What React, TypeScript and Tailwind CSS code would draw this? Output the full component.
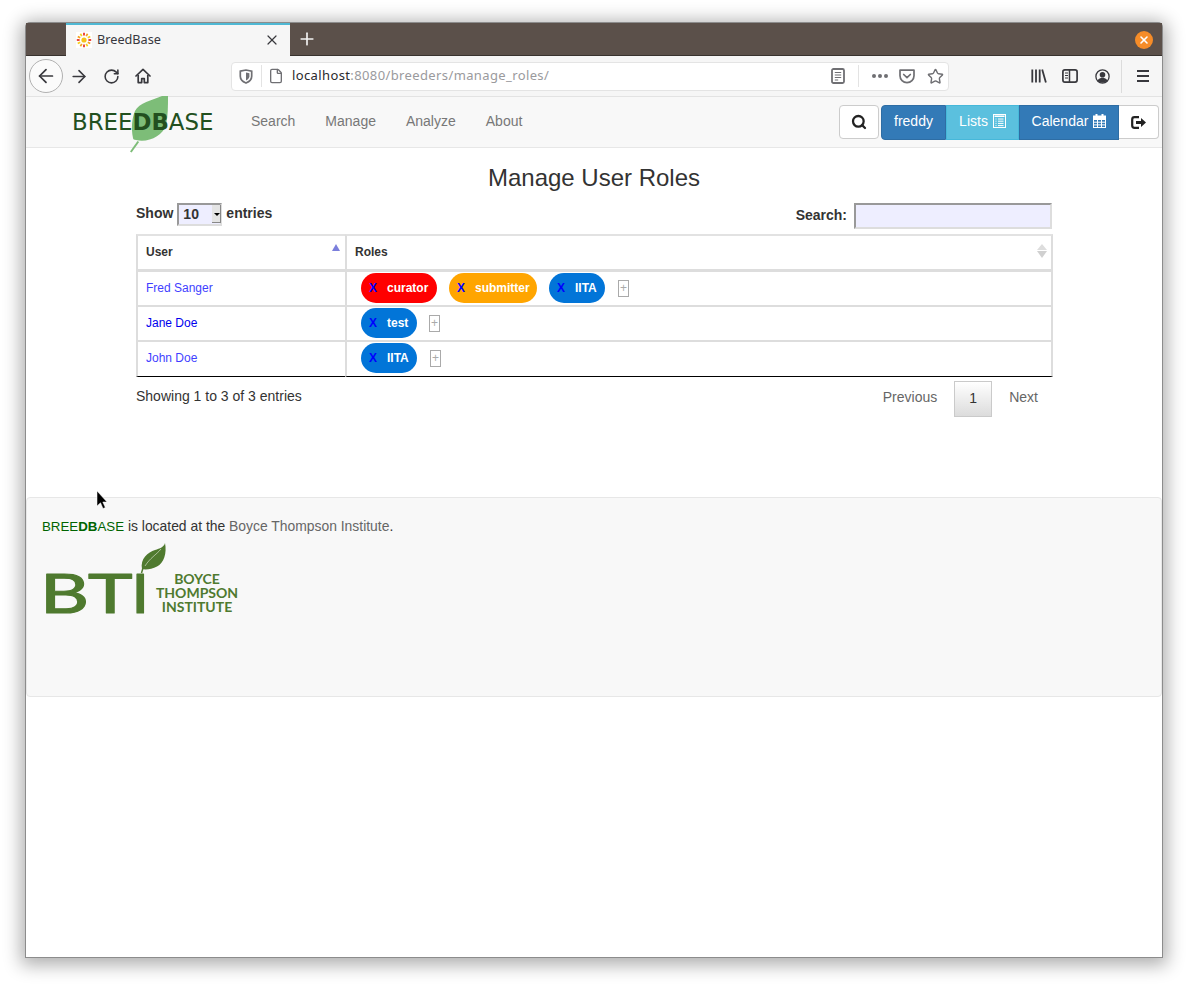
// Firefox window showing the BreedBase "Manage User Roles" page.

import { ArrowLeft, ArrowRight, File, Plus, RotateCw, Search, Star, X } from 'lucide-react';

const chromeFont = "font-['Noto_Sans','Open_Sans',sans-serif]";

type Role = { name: string; color: string; width: string };

const users: { name: string; link: string; roles: Role[]; plusGap: string }[] = [
  {
    name: 'Fred Sanger',
    link: 'text-[#3f3fff]',
    roles: [
      { name: 'curator', color: 'bg-[#ff0000]', width: 'w-[76px]' },
      { name: 'submitter', color: 'bg-[#ffa500]', width: 'w-[88px]' },
      { name: 'IITA', color: 'bg-[#0275d8]', width: 'w-[56px]' },
    ],
    plusGap: 'ml-[1px]',
  },
  {
    name: 'Jane Doe',
    link: 'text-[#0000ee]',
    roles: [{ name: 'test', color: 'bg-[#0275d8]', width: 'w-[56px]' }],
    plusGap: 'ml-0',
  },
  {
    name: 'John Doe',
    link: 'text-[#3f3fff]',
    roles: [{ name: 'IITA', color: 'bg-[#0275d8]', width: 'w-[56px]' }],
    plusGap: 'ml-[1px]',
  },
];

function Favicon() {
  return (
    <svg width="16" height="16" viewBox="0 0 16 16" className="bg-white">
      <circle cx="8" cy="8" r="2.6" fill="#f6c21c" />
      {Array.from({ length: 12 }).map((_, i) => (
        <line
          key={i}
          x1="8"
          y1="3.6"
          x2="8"
          y2="0.8"
          stroke={i % 3 === 0 ? '#e8261c' : i % 3 === 1 ? '#f4a11c' : '#f7d01e'}
          strokeWidth="1.7"
          transform={`rotate(${i * 30} 8 8)`}
        />
      ))}
    </svg>
  );
}

function HomeIcon() {
  return (
    <svg width="16" height="16" viewBox="0 0 16 16" fill="none" stroke="#38383d" strokeWidth="1.7">
      <path d="M1 8 8 1.4 15 8" strokeLinejoin="round" strokeLinecap="round" />
      <path d="M3.2 7v7.6h3.5v-4h2.6v4h3.5V7" strokeLinejoin="round" />
    </svg>
  );
}

function ShieldIcon() {
  return (
    <svg width="14" height="15" viewBox="0 0 14 15" fill="none">
      <path d="M1.3 2.2 7 1l5.7 1.2v5c0 3.2-2.6 5.5-5.7 6.8C3.9 12.7 1.3 10.4 1.3 7.2z" stroke="#6f6f73" strokeWidth="1.7" />
      <path d="M7 3.5 10.4 4.2v3c0 1.9-1.5 3.3-3.4 4.2z" fill="#6f6f73" />
    </svg>
  );
}

function ReaderIcon() {
  return (
    <svg width="14" height="16" viewBox="0 0 14 16" fill="none" stroke="#6f6f73">
      <rect x="1" y="1" width="12" height="14" rx="1.5" strokeWidth="1.8" />
      <path d="M3.8 4.5h6.4M3.8 7h6.4M3.8 9.5h6.4M3.8 12h3.4" strokeWidth="1.1" />
    </svg>
  );
}

function PocketIcon() {
  return (
    <svg width="16" height="15" viewBox="0 0 16 15" fill="none" stroke="#6f6f73" strokeWidth="1.7">
      <path d="M1 1.2h14v5.6c0 3.7-3.1 6.8-7 6.8s-7-3.1-7-6.800z" strokeLinejoin="round" />
      <path d="M4.700 5.500 8 8.700l3.300-3.200" strokeLinecap="round" strokeLinejoin="round" />
    </svg>
  );
}

function LibraryIcon() {
  return (
    <svg width="16" height="14" viewBox="0 0 16 14" fill="none" stroke="#38383d" strokeWidth="1.8">
      <path d="M1.300 0.500v13M5 0.500v13M8.700 0.500v13M11.200 0.500 14.900 13.500" />
    </svg>
  );
}

function SidebarIcon() {
  return (
    <svg width="16" height="14" viewBox="0 0 16 14" fill="none">
      <rect x="0.9" y="0.9" width="14.2" height="12.2" rx="2" stroke="#38383d" strokeWidth="1.7" />
      <path d="M7.500 1v12" stroke="#38383d" strokeWidth="1.5" />
      <path d="M3 4h3M3 6.500h3M3 9h3" stroke="#38383d" strokeWidth="1.1" />
    </svg>
  );
}

function AccountIcon() {
  return (
    <svg width="15" height="15" viewBox="0 0 15 15" fill="none">
      <circle cx="7.5" cy="7.5" r="6.6" stroke="#38383d" strokeWidth="1.3" />
      <circle cx="7.5" cy="5.8" r="2.8" fill="#38383d" />
      <path d="M2.600 11.500c1-1.900 2.800-2.700 4.900-2.700s3.900.8 4.900 2.700c-1.200 1.400-2.900 2.200-4.900 2.200s-3.700-.8-4.900-2.200z" fill="#38383d" />
    </svg>
  );
}

function ListAltIcon() {
  return (
    <svg width="13" height="14" viewBox="0 0 13 14" fill="none">
      <rect x="0.5" y="0.5" width="12" height="13" stroke="#ffffff" />
      <rect x="1.5" y="1.5" width="10" height="1.5" fill="#ffffff" />
      <path d="M2.500 5h1M5 5h5.500M2.500 7.200h1M5 7.200h5.500M2.500 9.400h1M5 9.400h5.500M2.500 11.600h1M5 11.600h5.500" stroke="#ffffff" />
    </svg>
  );
}

function CalendarIcon() {
  return (
    <svg width="13" height="14" viewBox="0 0 13 14" fill="none">
      <rect x="0" y="1.5" width="13" height="3.5" fill="#ffffff" />
      <rect x="2.5" y="0" width="2" height="2.5" fill="#ffffff" />
      <rect x="8.5" y="0" width="2" height="2.5" fill="#ffffff" />
      <rect x="0.5" y="5.5" width="12" height="8" stroke="#ffffff" />
      <path d="M4.500 5.500v8M8.500 5.500v8M0.500 8.200h12M0.500 10.900h12" stroke="#ffffff" strokeWidth="1" />
    </svg>
  );
}

function Browser() {
  return (
    <div className={chromeFont}>
      <div className="flex h-[33px] bg-[#5b504a] pl-10 shadow-[inset_0_-1px_0_#38322e]">
        <div className="flex h-[33px] w-[224px] items-center border-t-2 border-[#4fb8d4] bg-[#f6f6f6] pb-[2px] pl-[10px] pr-[10px]">
          <Favicon />
          <span className="ml-[5px] flex-1 text-[12.7px] text-[#38383d]">BreedBase</span>
          <X size={16} strokeWidth={1.8} className="text-[#38383d]" />
        </div>
        <div className="flex h-[32px] w-[34px] items-center justify-center">
          <Plus size={20} strokeWidth={2} className="text-[#f2f2f2]" />
        </div>
        <div className="flex h-[33px] flex-1 items-center justify-end pr-[9px] pt-[1px]">
          <div className="flex h-[18px] w-[18px] items-center justify-center rounded-full bg-[#f68c28]">
            <X size={12} strokeWidth={3.2} className="text-white" />
          </div>
        </div>
      </div>

      <div className="flex h-[41px] items-center border-b border-[#e3e3e3] bg-[#f6f6f6] pl-[3px]">
        <div className="flex h-[34px] w-[34px] items-center justify-center rounded-full border border-[#b1b1b1] bg-[#fbfbfb]">
          <ArrowLeft size={22} strokeWidth={1.9} className="text-[#38383d]" />
        </div>
        <div className="ml-[6px] flex w-[20px] justify-center">
          <ArrowRight size={21} strokeWidth={1.9} className="text-[#38383d]" />
        </div>
        <div className="ml-3 flex w-[20px] justify-center">
          <RotateCw size={17} strokeWidth={2.2} className="text-[#38383d]" />
        </div>
        <div className="ml-3 flex w-[20px] justify-center">
          <HomeIcon />
        </div>

        <div className="ml-[78px] flex h-[29px] w-[718px] items-center rounded-[4px] border border-[#e4e4e4] bg-white pl-[7px]">
          <ShieldIcon />
          <div className="ml-2 h-[22px] w-px bg-[#e3e3e3]" />
          <File size={16} strokeWidth={2} className="ml-[6px] text-[#6f6f73]" />
          <span className="ml-[8px] flex-1 text-[13px] tracking-[0.38px] text-[#9a9a9d]">
            <span className="text-[#2a2a2e]">localhost</span>:8080/breeders/manage_roles/
          </span>
          <ReaderIcon />
          <div className="ml-[13px] h-[22px] w-px bg-[#e3e3e3]" />
          <div className="ml-[13px] flex w-[16px] justify-between">
            <span className="h-[4px] w-[4px] rounded-full bg-[#6f6f73]" />
            <span className="h-[4px] w-[4px] rounded-full bg-[#6f6f73]" />
            <span className="h-[4px] w-[4px] rounded-full bg-[#6f6f73]" />
          </div>
          <div className="ml-[11px]">
            <PocketIcon />
          </div>
          <Star size={17} strokeWidth={2} className="ml-[12px] mr-[4px] text-[#6f6f73]" />
        </div>

        <div className="ml-[82px]">
          <LibraryIcon />
        </div>
        <div className="ml-[15px]">
          <SidebarIcon />
        </div>
        <div className="ml-[17px]">
          <AccountIcon />
        </div>
        <div className="ml-[11px] h-[33px] w-px bg-[#dcdcdc]" />
        <div className="ml-[15px] flex h-[12px] w-[12px] flex-col justify-between">
          <span className="h-[2px] bg-[#38383d]" />
          <span className="h-[2px] bg-[#38383d]" />
          <span className="h-[2px] bg-[#38383d]" />
        </div>
      </div>
    </div>
  );
}

function NavBar() {
  return (
    <div className="flex h-[51px] items-center border-b border-[#e7e7e7] bg-[#f8f8f8]">
      <div className="relative ml-[46px] w-[164px] pt-[3px]">
        <svg width="40" height="57" viewBox="0 0 40 57" className="absolute left-[58px] top-[-12px]">
          <path d="M32 0C22 4 9 7 5 15 2 22 1 32 3 42c0 1 1 2 3 2 12 3 27-4 30-15 2-9 2-19 2-29z" fill="#7dbd78" />
          <path d="M8.300 45.500 0.800 56" stroke="#7dbd78" strokeWidth="2" />
        </svg>
        <span className="relative font-['DejaVu_Sans',sans-serif] text-[22.85px] leading-none text-[#22501f]">
          BREE<b>DB</b>ASE
        </span>
      </div>
      <div className="flex pb-[3px] text-sm text-[#777777]">
        <a className="px-[15px]">Search</a>
        <a className="px-[15px]">Manage</a>
        <a className="px-[15px]">Analyze</a>
        <a className="px-[15px]">About</a>
      </div>
      <div className="ml-auto mr-[3px] mt-[8px] flex items-start self-start text-sm">
        <div className="flex h-[34px] w-[40px] items-center justify-center rounded-[4px] border border-[#cccccc] bg-white">
          <Search size={16} strokeWidth={3.4} className="text-[#222]" />
        </div>
        <div className="ml-[2px] flex h-[35px] w-[65px] items-center justify-center rounded-l-[4px] border border-[#2e6da4] bg-[#337ab7] pb-[3px] text-white">
          freddy
        </div>
        <div className="flex h-[35px] w-[73px] items-center justify-center gap-[5px] border border-[#46b8da] bg-[#5bc0de] pb-[3px] text-white">
          Lists <ListAltIcon />
        </div>
        <div className="flex h-[35px] w-[100px] items-center justify-center gap-[5px] border border-[#2e6da4] bg-[#337ab7] pb-[3px] text-white">
          Calendar <CalendarIcon />
        </div>
        <div className="flex h-[34px] w-[40px] items-center justify-center rounded-r-[4px] border border-l-0 border-[#cccccc] bg-white">
          <svg width="15" height="13" viewBox="0 0 15 13" fill="none">
            <path d="M8 1.200H3.500A2.300 2.300 0 0 0 1.200 3.500v6a2.300 2.300 0 0 0 2.300 2.300H8" stroke="#222" strokeWidth="2.2" />
            <path d="M5 5h5V2l5 4.500L10 11V8H5z" fill="#222" />
          </svg>
        </div>
      </div>
    </div>
  );
}

function RolePill({ role }: { role: Role }) {
  return (
    <span className={`mr-3 flex h-[30px] items-center rounded-[15px] pl-2 font-bold text-white ${role.color} ${role.width}`}>
      <span className="mr-[10px] text-[#0000ff]">X</span>
      {role.name}
    </span>
  );
}

function RolesTable() {
  return (
    <table className="mt-[5px] w-[917px] table-fixed border-separate border-spacing-0 text-xs text-[#333333]">
      <thead>
        <tr className="h-[38px]">
          <th className="relative w-[209px] border-y-2 border-b-[3px] border-l-2 border-[#dddddd] border-t-[#e2e2e2] pb-[2px] pl-2 text-left font-bold">
            User
            <span className="absolute right-[5px] top-[8px] h-0 w-0 border-x-[4px] border-b-[7px] border-x-transparent border-b-[#7b7fdc]" />
          </th>
          <th className="relative border-x-2 border-y-2 border-b-[3px] border-[#dddddd] border-t-[#e2e2e2] pb-[2px] pl-2 text-left font-bold">
            Roles
            <span className="absolute right-[4px] top-[8px] h-0 w-0 border-x-[5px] border-b-[6px] border-x-transparent border-b-[#dddddd]" />
            <span className="absolute right-[4px] top-[15px] h-0 w-0 border-x-[5px] border-t-[7px] border-x-transparent border-t-[#d0d0d0]" />
          </th>
        </tr>
      </thead>
      <tbody>
        {users.map((u, i) => {
          const last = i === users.length - 1;
          const bottom = last ? 'border-b border-b-black' : 'border-b-2 border-b-[#dddddd]';
          return (
            <tr key={u.name} className="h-[35px]">
              <td className={`border-l-2 border-l-[#dddddd] pl-2 ${last ? 'pb-[2px]' : 'pb-[1px]'} ${bottom}`}>
                <a className={u.link}>{u.name}</a>
              </td>
              <td className={`border-x-2 border-x-[#dddddd] pl-[14px] pt-[1px] align-top ${bottom}`}>
                <div className="flex items-center">
                  {u.roles.map((r) => (
                    <RolePill key={r.name} role={r} />
                  ))}
                  <span className={`flex h-[17px] w-[11px] items-center justify-center border border-[#aaaaaa] text-[#aaaaaa] ${u.plusGap}`}>
                    +
                  </span>
                </div>
              </td>
            </tr>
          );
        })}
      </tbody>
    </table>
  );
}

function BtiLogo() {
  return (
    <div className="mt-[7px] flex items-end">
      <svg width="126" height="84" viewBox="0 0 126 84" className="mb-[-13px] block overflow-visible">
        <g
          fontFamily="Lato, sans-serif"
          fontSize="54"
          fontWeight="400"
          fill="#4f7a2f"
          stroke="#4f7a2f"
          strokeWidth="1.2"
          strokeLinejoin="round"
        >
          <text x="-2" y="70" textLength="49" lengthAdjust="spacingAndGlyphs">B</text>
          <text x="46" y="70" textLength="44.5" lengthAdjust="spacingAndGlyphs">T</text>
          <text x="89.3" y="70" textLength="18" lengthAdjust="spacingAndGlyphs">I</text>
        </g>
        <path d="M100 26C98 16 106 9 113 7 118 5.500 122 4 123 0 125 10 122 20 115 23.500 110 26 104 27 100 26z" fill="#4f7a2f" />
        <path d="M103 23C108 15 114 12 119 6" stroke="#cfdcc2" strokeWidth="0.7" fill="none" />
        <path d="M101 25 99.500 30" stroke="#4f7a2f" strokeWidth="1.5" />
      </svg>
      <div className="ml-[-13px] w-[84px] text-center font-['Lato',sans-serif] text-[14px] font-bold leading-[14px] text-[#4f7a2f]">
        BOYCE
        <br />
        THOMPSON
        <br />
        INSTITUTE
      </div>
    </div>
  );
}

function Footer() {
  return (
    <div className="mt-[80px] h-[200px] rounded-[4px] border border-[#e7e7e7] bg-[#f8f8f8] pl-[15px] pt-[19px] text-[13.9px] text-[#333333]">
      <p className="leading-[18px]">
        <span className="text-[13.3px] text-[#006400]">
          BREE<b>DB</b>ASE
        </span>{' '}
        is located at the <a className="text-[#666666]">Boyce Thompson Institute</a>.
      </p>
      <BtiLogo />
    </div>
  );
}

export default function App() {
  return (
    <div className="relative h-[986px] w-[1188px] overflow-hidden bg-white pl-[26px] pt-[23px] font-['Liberation_Sans',Arial,sans-serif]">
      <div className="h-[934px] w-[1136px] rounded-t-[4px] bg-white shadow-[0_0_0_1px_#8c8c8c,0_3px_18px_5px_rgba(0,0,0,0.32)]">
        <Browser />
        <NavBar />

        <h1 className="mt-[17px] text-center text-2xl font-normal leading-[26px] text-[#333333]">
          Manage User Roles
        </h1>

        <div className="ml-[110px] w-[917px]">
          <div className="mt-[12px] flex items-start justify-between text-sm font-bold text-[#333333]">
            <label className="flex h-[23px] items-center">
              <span className="pb-[3px]">Show</span>
              <span className="mx-[4px] flex h-[23px] w-[45px] items-center justify-between border-2 border-b-[#dddddd] border-l-[#999999] border-r-[#dddddd] border-t-[#999999] bg-[#eeeeff] pb-[1px] pl-1">
                10
                <span className="mr-[-1px] flex h-[18px] w-[9px] items-center justify-center bg-[#e4e4e4] shadow-[inset_-1px_-1px_0_#888]">
                  <span className="h-0 w-0 border-x-[3px] border-t-[3px] border-x-transparent border-t-black" />
                </span>
              </span>
              <span className="pb-[3px]">entries</span>
            </label>
            <label className="mr-[1px] flex h-[26px] items-center">
              <span className="pb-[2px]">Search:</span>
              <input className="ml-[7px] h-[26px] w-[198px] border-2 border-b-[#dddddd] border-l-[#999999] border-r-[#dddddd] border-t-[#999999] bg-[#eeeeff]" />
            </label>
          </div>

          <RolesTable />

          <div className="flex items-start justify-between text-sm text-[#333333]">
            <span className="mt-[10px] leading-[18px]">Showing 1 to 3 of 3 entries</span>
            <div className="mt-[4px] flex items-center text-[#666666]">
              <span className="mb-[4px] mr-[17px]">Previous</span>
              <span className="flex h-[36px] w-[38px] items-center justify-center border border-[#cacaca] bg-gradient-to-b from-white to-[#dcdcdc] pb-[3px] text-[#333333]">
                1
              </span>
              <span className="mb-[4px] ml-[17px] mr-[15px]">Next</span>
            </div>
          </div>
        </div>

        <Footer />
      </div>

      <svg width="14" height="22" viewBox="0 0 14 22" className="absolute left-[96px] top-[491px]">
        <path d="M1 0v15l3.500-3.200 2.500 5.700 2.300-1-2.500-5.500H11z" fill="#000" stroke="#fff" strokeWidth="0.5" />
      </svg>
    </div>
  );
}
